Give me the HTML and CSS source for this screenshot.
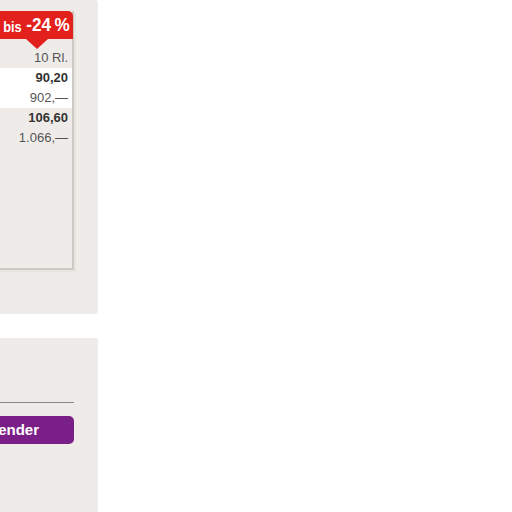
FILE: index.html
```html
<!DOCTYPE html>
<html>
<head>
<meta charset="utf-8">
<link rel="stylesheet" href="styles.css">
</head>
<body>
<div class="wrap">
  <section class="panel panel-top">
    <div class="box">
      <div class="badge"><span class="bis">bis</span><span class="pct">-24&#8201;%</span></div>
      <div class="rows">
        <div class="row unit">10 Rl.</div>
        <div class="row white bold">90,20</div>
        <div class="row white">902,—</div>
        <div class="row bold">106,60</div>
        <div class="row">1.066,—</div>
      </div>
    </div>
  </section>
  <section class="panel panel-bottom">
    <div class="rule"></div>
    <div class="btn">Versender</div>
  </section>
</div>
</body>
</html>
```
FILE: styles.css
```css
html, body {
  margin: 0;
  padding: 0;
  background: #ffffff;
  overflow: hidden;
}
body {
  font-family: "Liberation Sans", Arial, sans-serif;
}
.wrap {
  width: 298px;
  margin-left: -200px;
  display: flex;
  flex-direction: column;
  gap: 24px;
}
.panel {
  background: #eeebe8;
  border-radius: 0 3px 3px 0;
  padding-right: 24px;
}
.panel-top {
  height: 314px;
  padding-top: 11px;
  box-sizing: border-box;
}
.box {
  position: relative;
  border-right: 2px solid #cdc9c4;
  border-bottom: 2px solid #cdc9c4;
  box-shadow: 2px 2px 0 #e8e4e0;
  height: 259px;
  box-sizing: border-box;
}
.badge {
  margin-left: auto;
  width: 140px;
  height: 28px;
  box-sizing: border-box;
  background: #e2201c;
  color: #ffffff;
  border-radius: 0 5px 0 0;
  margin-right: -1px;
  display: flex;
  align-items: center;
  justify-content: flex-end;
  padding-right: 3px;
  gap: 3px;
  font-weight: bold;
  position: relative;
}
.badge::after {
  content: "";
  position: absolute;
  left: 93px;
  top: 28px;
  border-left: 11px solid transparent;
  border-right: 11px solid transparent;
  border-top: 10px solid #e2201c;
}
.bis {
  display: inline-block;
  font-size: 15px;
  line-height: 1;
  transform: scaleX(0.85);
  transform-origin: right center;
  margin-top: 2px;
}
.pct {
  display: inline-block;
  font-size: 18px;
  line-height: 1;
  transform: scaleX(0.95);
  transform-origin: right center;
}
.rows {
  padding-top: 9px;
}
.row {
  height: 20px;
  line-height: 20px;
  text-align: right;
  padding-right: 4px;
  font-size: 13px;
  color: #555555;
}
.row.white {
  background: #ffffff;
}
.row.bold {
  font-weight: bold;
  color: #333333;
}
.panel-bottom {
  height: 174px;
  padding-top: 64px;
  box-sizing: border-box;
  border-radius: 0 3px 0 0;
}
.rule {
  height: 1px;
  background: #8a8784;
}
.btn {
  margin-top: 13px;
  height: 28px;
  background: #7b1f88;
  color: #ffffff;
  border-radius: 5px;
  font-weight: bold;
  font-size: 15px;
  line-height: 28px;
  text-align: right;
  padding-right: 35px;
}
```
